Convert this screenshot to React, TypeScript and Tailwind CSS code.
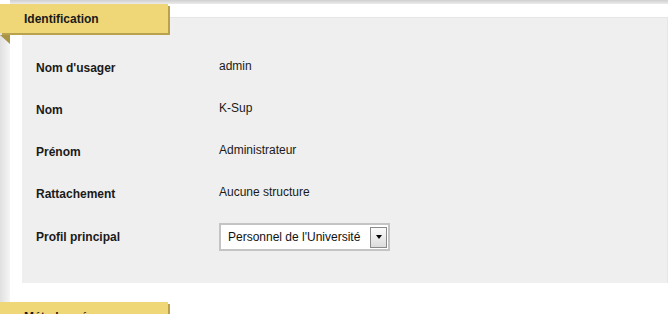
const rows = [
  { label: "Nom d'usager", value: "admin" },
  { label: "Nom", value: "K-Sup" },
  { label: "Prénom", value: "Administrateur" },
  { label: "Rattachement", value: "Aucune structure" },
];

function Tab({ title, className }: { title: string; className: string }) {
  return (
    <div className={"absolute left-0 w-[168px] " + className}>
      <div className="h-[29px] bg-[#efd778] shadow-[2px_2px_0_#b9a24e] pl-[24px] pt-[6px] text-[12px] font-bold text-[#1a1a1a]">
        {title}
      </div>
      <div className="mt-[2px] h-0 w-0 border-t-[9px] border-l-[10px] border-t-[#a99344] border-l-transparent" />
    </div>
  );
}

export default function App() {
  return (
    <div
      className="relative h-[314px] w-[668px] overflow-hidden bg-white"
      style={{ fontFamily: '"Liberation Sans", Arial, sans-serif' }}
    >
      <div className="ml-[10px] h-[4px] bg-gradient-to-b from-[#cfcfcf] to-[#ececec]" />
      <div className="flex h-[310px]">
        <div className="w-[10px] bg-gradient-to-r from-[#e0e0e0] to-[#f6f6f6]" />
        <div className="flex-1 pl-[12px] pt-[13px]">
          <div className="h-[266px] border-t border-r border-[#e6e6e6] bg-[#efefef] pl-[14px] pt-[29px]">
            {rows.map((r) => (
              <div key={r.label} className="flex h-[42px] items-center text-[12px] text-[#1a1a1a]">
                <div className="w-[183px] font-bold">{r.label}</div>
                <div className="-mt-[4px]">{r.value}</div>
              </div>
            ))}
            <div className="flex h-[44px] items-center text-[12px] text-[#1a1a1a]">
              <div className="w-[183px] font-bold">Profil principal</div>
              <div className="flex h-[28px] w-[171px] items-center justify-between border-2 border-[#c4c4c4] bg-white pl-[7px] pr-[1px]">
                <span className="text-[#111]">Personnel de l'Université</span>
                <div className="flex h-[21px] w-[17px] items-center justify-center border border-[#8a8a8a] bg-gradient-to-b from-[#fbfbfb] to-[#dcdcdc]">
                  <div className="h-0 w-0 border-x-[3.5px] border-t-[4px] border-x-transparent border-t-black" />
                </div>
              </div>
            </div>
          </div>
        </div>
      </div>
      <Tab title="Identification" className="top-[4px]" />
      <Tab title="Métadonnées" className="top-[302px]" />
    </div>
  );
}
